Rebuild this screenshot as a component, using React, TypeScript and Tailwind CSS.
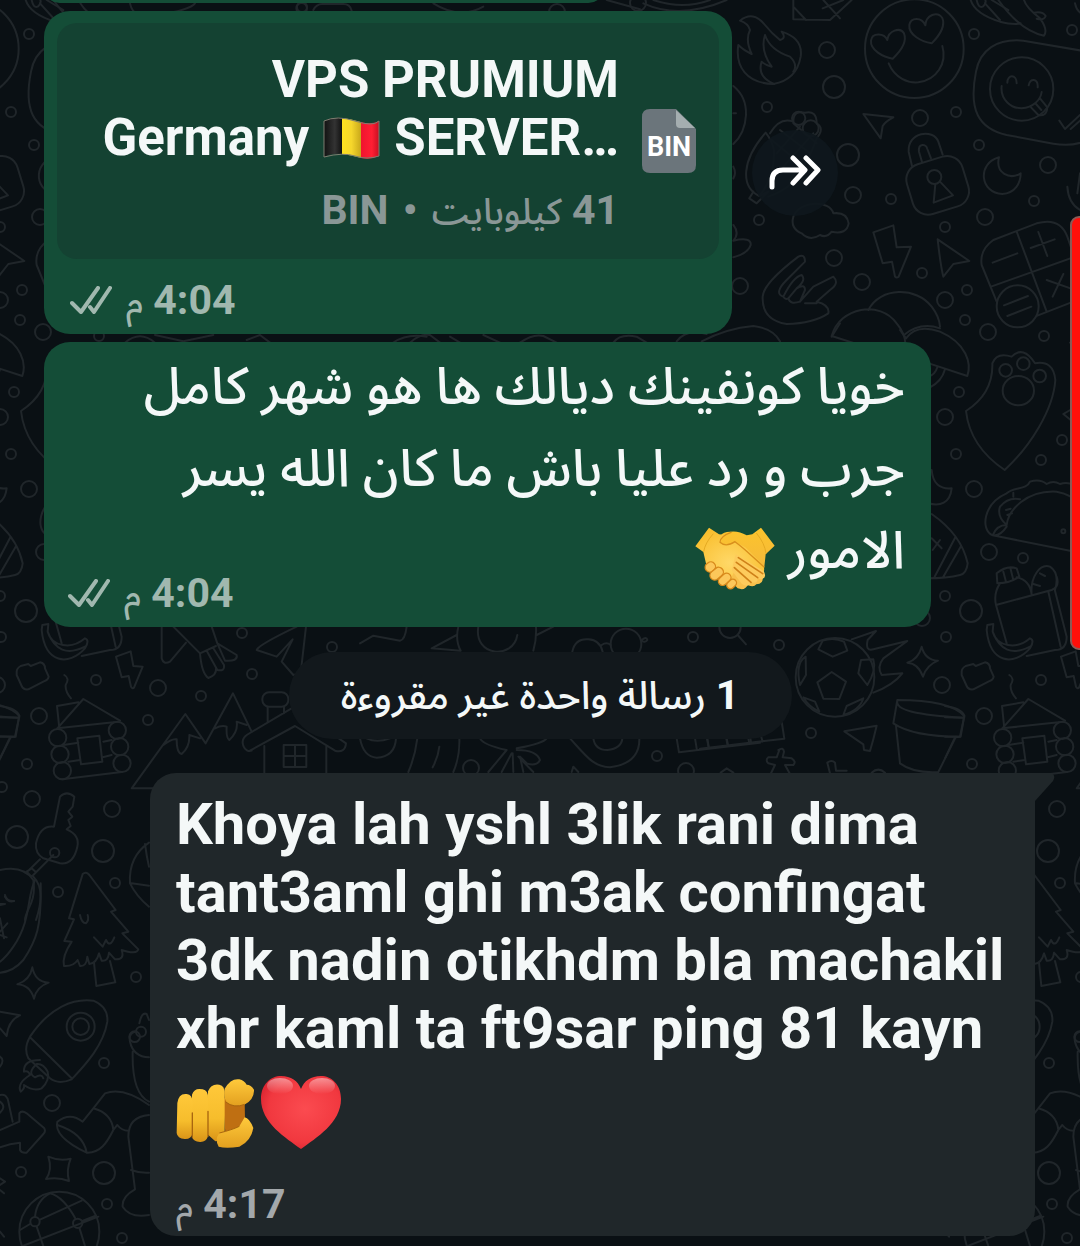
import React from "react";

const dots: [number, number, number][] = [
  [974, 34, 5], [1072, 30, 5], [827, 50, 8], [834, 87, 11], [920, 118, 8], [956, 112, 5],
  [848, 155, 11], [979, 145, 5], [1048, 165, 8], [853, 195, 8], [891, 199, 5], [1034, 201, 5],
  [985, 217, 8], [945, 227, 5], [834, 258, 8], [862, 282, 8], [922, 273, 5], [945, 300, 8],
  [967, 290, 5], [965, 320, 5], [988, 332, 8], [1044, 336, 5], [959, 392, 5], [945, 417, 8],
  [956, 454, 5], [1062, 440, 5], [1041, 460, 5], [974, 489, 8], [989, 552, 8], [1023, 558, 5],
  [945, 596, 5], [971, 611, 11], [946, 637, 5], [922, 618, 8], [767, 107, 5], [759, 220, 5],
  [740, 286, 8], [638, 3, 8], [557, 12, 8], [302, 7, 5], [779, 645, 5], [942, 685, 8],
  [811, 733, 5], [39, 716, 8], [27, 764, 5], [96, 680, 5], [158, 688, 8], [201, 696, 5],
  [252, 674, 5], [242, 633, 5], [332, 647, 5], [148, 720, 5], [32, 799, 8], [112, 809, 8],
  [17, 837, 11], [103, 851, 11], [115, 883, 5], [58, 892, 5], [2, 787, 5], [136, 977, 5],
  [104, 1063, 5], [52, 1103, 8], [21, 1172, 5], [104, 1173, 11], [107, 1204, 5], [122, 1238, 5],
  [693, 637, 5], [657, 756, 5], [686, 771, 8], [471, 768, 8],
];

function DoodleTile() {
  return (
    <g id="doodles">
      {dots.map(([x, y, r]) => (
        <circle key={`${x}-${y}`} cx={x} cy={y} r={r} />
      ))}

      {/* heart-eyed face, sticker note, lock, moon, calculator */}
      <g transform="translate(820 0) scale(0.33333)" strokeWidth="6">
        <circle cx="283" cy="146" r="148" />
        <path d="M218 176C190 172 150 150 153 122C156 98 192 98 202 120C205 92 240 80 252 100C262 125 240 155 218 176Z" />
        <path d="M335 130C305 125 265 105 268 75C272 52 305 50 316 76C318 45 352 32 367 54C378 82 355 110 335 130Z" />
        <path d="M206 190C225 235 265 250 295 247C350 240 382 190 367 138" />
        <path d="M890 170L610 122C530 115 480 150 468 215C445 330 475 385 560 405L700 431Q780 445 835 400" />
        <circle cx="605" cy="267" r="95" />
        <path d="M562 248C562 222 590 222 590 250M626 256C630 232 655 235 653 262M545 258C540 300 575 325 605 325C640 322 662 300 665 276M633 322L655 345Q680 350 682 322L660 295M648 312L664 330" />
        <path d="M718 362L735 387L780 345M752 387L780 362" />
        <path d="M452 0Q465 42 540 65Q580 75 602 70M470 0Q475 25 488 20Q500 10 496 0M535 0Q600 92 672 107Q685 90 660 55Q618 22 612 0M642 38Q668 33 677 48Q672 62 650 56" />
        <path d="M130 342L220 352Q195 365 188 378L182 415Q150 370 130 342Z" />
        <path d="M276 498L266 455C262 395 340 385 355 425L368 464M306 486L297 455C294 430 318 430 322 447L333 475" />
        <rect x="266" y="478" width="174" height="156" rx="48" transform="rotate(-17 353 556)" />
        <circle cx="343" cy="531" r="21" />
        <path d="M346 552L341 608L399 586L360 545" />
        <path d="M537 472C470 490 480 580 547 582C585 580 602 550 602 520C570 540 525 520 537 472Z" />
        <path d="M160 697L220 676L230 742L273 740L236 830Q230 835 225 830L216 785L188 790Z" />
        <path d="M353 718L448 783L400 792L370 830Q362 800 353 718Z" />
        <path d="M530 905L485 795Q478 750 520 720L650 670Q720 650 742 710L790 850Q795 880 760 905L652 947M590 695L680 935M513 860L780 765M518 788L592 760M632 744L704 718M655 696L682 768M680 840L760 868M730 822L698 890M552 916L624 888M562 948L634 920" />
        <circle cx="593" cy="919" r="63" />
        <path d="M145 930C180 860 290 860 335 920Q358 950 360 980M35 1008C60 920 180 900 230 970Q255 1000 256 1030M35 1008L256 1078M252 1005Q300 965 360 985" />
        <path d="M-80 650C-60 600 30 600 40 640Q80 635 86 670Q80 705 35 695Q20 715 0 705Q-30 725 -55 700Q-90 685 -80 650Z" />
        <path d="M742 560Q745 610 780 630M780 520L772 580" />
      </g>

      {/* flame, kite, corn, rock hand */}
      <g transform="translate(400 0) scale(0.33333)" strokeWidth="6">
        <path d="M1020 62Q1060 30 1095 75Q1115 100 1140 120Q1160 115 1145 95Q1210 115 1202 170Q1190 240 1120 252C1040 250 1005 200 1015 135Q1030 150 1055 162Q1035 120 1050 90Q1045 70 1020 62Z" />
        <path d="M1122 252Q1070 230 1085 185Q1095 195 1115 200Q1080 150 1095 105Q1110 150 1170 170Q1195 195 1180 215" />
        <path d="M1180 0V58L1290 60L1355 0M1180 20L1218 60M1270 0L1320 55M1268 25L1330 0" />
        <path d="M1000 258Q1040 290 1038 345Q1035 400 1000 432M1000 500Q1010 520 1000 535M1000 340H1008" />
        <path d="M1097 398C1025 480 1020 560 1078 588Q1125 530 1122 450Q1115 420 1097 398ZM1078 588L1105 575L1070 610L1048 595L1060 575" />
        <path d="M1110 400Q1140 350 1180 365Q1180 330 1215 338Q1250 330 1250 370Q1275 385 1250 415Q1230 470 1215 490Q1190 560 1105 590M1115 420L1200 490M1140 390L1230 460M1180 370L1250 430M1130 460L1200 380M1150 500L1240 400M1170 540L1210 480" />
        <circle cx="1196" cy="355" r="20" />
        <circle cx="1232" cy="385" r="24" />
        <path d="M1000 675Q1020 700 1000 722Q1055 710 1052 735Q1045 760 1000 772" />
        <path d="M1195 770Q1215 760 1215 785L1160 840Q1120 880 1150 890Q1155 900 1165 895Q1170 915 1200 905L1240 860L1300 830Q1320 850 1290 870L1250 905Q1290 915 1285 940Q1240 970 1160 972Q1085 960 1088 890Q1090 850 1195 770ZM1150 890Q1180 830 1205 825Q1220 840 1190 865L1165 895M1190 865Q1215 850 1215 870L1200 905M1215 910H1250" />
        <path d="M830 1024Q860 985 920 1002M905 1024Q980 985 1060 978Q1120 985 1140 1024M1295 1010L1320 970M30 1028Q60 1000 90 1005L120 1028M150 1010L180 1028M250 1005L300 1028M360 1028Q400 1000 430 1008L470 1028M640 1028Q660 1000 710 1010L740 1028" />
        <path d="M730 10Q840 60 980 0M760 0Q850 30 930 0M620 0L720 28" />
        <path d="M100 10Q180 60 250 20" />
      </g>

      {/* strip between the first bubbles */}
      <g transform="translate(40 0) scale(0.33333)" strokeWidth="6">
        <path d="M270 10Q280 60 350 45Q450 30 465 10M820 30Q830 10 850 12H910Q930 12 935 32M0 10L45 60M20 0L70 30" />
        <path d="M255 1028Q300 990 345 1028M345 1005L430 1024L520 1005M620 1020L660 1005L690 1028M1060 1028Q1100 1000 1160 1010" />
        <circle cx="785" cy="25" r="16" />
      </g>

      {/* mushroom, paw, taco, bottle, banana */}
      <g transform="translate(800 330) scale(0.33333)" strokeWidth="6">
        <path d="M300 0L318 25Q350 -20 420 5C500 40 515 100 502 138L380 98M435 118Q425 155 390 172M412 112Q405 135 385 140" />
        <path d="M498 243Q580 190 577 100Q590 65 635 80Q670 45 705 100Q760 90 766 150C760 240 690 350 614 420Q510 350 498 243Z" />
        <circle cx="617" cy="121" r="19" />
        <circle cx="670" cy="101" r="19" />
        <circle cx="719" cy="138" r="19" />
        <ellipse cx="655" cy="182" rx="47" ry="44" />
        <path d="M845 220L790 252L815 272M395 420Q400 480 455 475C450 520 420 530 385 520" />
        <path d="M578 616C540 600 550 520 620 490C640 470 680 480 690 455Q720 445 740 462Q760 450 780 462Q820 450 850 490C890 530 905 600 905 640Q890 680 840 668L578 616M578 616Q590 585 620 585C625 540 680 480 770 485C860 500 890 600 860 665M640 488V500M620 585Q590 560 600 530Q625 500 660 508M578 616Q600 620 620 590M618 540L632 536M622 555L636 550" />
        <circle cx="790" cy="604" r="6" />
        <path d="M395 552C450 590 490 640 503 700Q500 730 480 735Q430 748 340 744M404 740L466 622M430 740L482 650M395 625L425 655M420 630L398 660" />
        <path d="M592 760L590 730Q620 705 650 715L658 740Q630 760 592 760ZM610 725L618 755M632 718L640 750M600 760Q580 790 588 825L620 940M588 825L755 780Q780 770 770 740M650 742Q690 750 695 795M695 795C690 740 720 700 750 710Q780 730 765 780M720 730L735 738M700 762L720 768M745 785L782 950M765 782L800 920Q800 960 765 960L680 978" />
        <path d="M562 885L580 882L578 905C590 950 650 960 690 925Q705 930 690 955C640 1010 570 1000 560 900ZM578 905Q610 990 690 950" />
      </g>

      {/* cabin, mountains, house, key, rocket top */}
      <g transform="translate(0 620) scale(0.33333)" strokeWidth="6">
        <path d="M50 155Q50 145 62 138L85 132L92 138L120 127Q135 130 135 145L146 170Q145 180 130 185L85 208Q70 210 65 198L50 165Z" />
        <path d="M348 110L392 94L400 138L428 140L402 203Q398 208 393 200L386 168L365 172Z" />
        <path d="M193 165Q210 175 197 195Q195 215 213 235M172 325L250 237L360 302M178 325L171 258L235 247M172 325L355 305M190 375L235 368M310 365L335 360M205 425L240 420M308 412L335 405M187 478L365 456" />
        <path d="M232 355L298 347L307 425L243 433Z" />
        <circle cx="173" cy="353" r="26" />
        <circle cx="180" cy="403" r="26" />
        <circle cx="187" cy="452" r="26" />
        <circle cx="352" cy="331" r="26" />
        <circle cx="359" cy="380" r="26" />
        <circle cx="366" cy="430" r="26" />
        <path d="M490 505H395L556 282L617 370L699 220L755 335M490 375Q515 355 530 358Q530 400 545 402Q570 380 568 345L600 355M645 325Q665 315 680 320Q678 355 688 360Q715 335 710 305L740 315" />
        <path d="M803 305V260M852 280V260M740 345L900 250M750 392L885 318L1005 392Q1035 400 1038 370L980 330M740 345C715 365 735 400 755 392M793 460V378M979 460V378M851 375H919V441H851ZM885 375V441M851 408H919" />
        <rect x="787" y="217" width="78" height="43" rx="20" />
        <path d="M485 20V115Q490 135 510 125L558 68M520 20L600 100M635 20L652 70L710 105Q715 125 675 122L652 70M600 100Q605 160 625 174Q650 165 648 145M600 100L648 78M620 92L652 150Q675 155 672 135L640 85" />
        <path d="M918 20L902 160L880 165L845 125L878 58L830 110L770 90Q775 75 890 20" />
        <path d="M162 620L180 530Q200 510 223 530L218 560L205 575L217 590L205 600L212 618L200 628Q240 645 232 680Q220 735 180 730L130 715Q105 700 108 670Q120 615 162 620Z" />
        <circle cx="164" cy="698" r="14" />
        <path d="M120 718L85 752M160 705L100 765M80 755L95 745L108 757L95 770Z" />
        <path d="M0 750Q70 735 100 780C110 850 75 870 75 900M100 770C130 800 125 850 108 900M15 825Q20 845 42 843M0 855L15 852" />
        <path d="M447 668Q385 710 390 790Q410 830 447 860M435 672Q440 710 447 740M395 790L447 797" />
        <path d="M0 258Q50 265 58 287L47 350H0M47 350L30 352L0 415M0 292L58 293" />
      </g>

      {/* tree, star, rocket, boot, globe */}
      <g transform="translate(0 860) scale(0.33333)" strokeWidth="6">
        <path d="M248 42Q258 33 268 45L347 150L333 155L385 215L367 220L415 268Q410 285 365 270Q375 300 345 298L327 278Q325 305 305 302L297 280Q290 310 268 312L262 290Q260 320 240 318L233 300Q220 320 192 318Q185 290 215 245L193 243L222 178L207 175Z" />
        <path d="M240 165Q245 190 258 190Q268 180 263 165M282 232L308 260L318 240Q330 265 343 232M282 308L289 378L346 367L330 303" />
        <path d="M97 322Q105 365 146 368Q110 380 102 416Q90 375 52 373Q90 360 97 322Z" />
        <path d="M105 60C80 110 95 180 40 260Q20 290 0 305M122 70C125 200 110 240 70 300Q40 335 0 338M15 110Q25 128 42 123M0 132H10M0 175L12 235M22 190L0 215M20 232L0 225" />
        <path d="M90 530C150 440 220 415 280 422Q325 440 322 485C310 560 250 620 215 658Q175 675 150 655L85 595Q70 565 90 530ZM90 532L215 655" />
        <circle cx="242" cy="500" r="42" />
        <circle cx="242" cy="500" r="25" />
        <path d="M120 600Q70 600 72 635Q85 630 90 645Q50 670 62 695Q75 685 72 675Q100 695 125 685Q150 660 143 635Q130 610 110 612Q80 640 105 652Q125 640 130 655" />
        <path d="M0 455L60 466Q25 480 20 528L0 505M0 590Q15 600 0 620" />
        <path d="M0 705Q20 700 25 725L38 785M0 810L58 785V760Q65 750 80 760L133 805Q138 815 130 822L80 878Q65 880 60 870V848Q30 850 0 862M0 725Q20 740 0 758" />
        <path d="M280 745L315 700Q370 680 447 735M280 745L248 785Q210 755 172 785Q160 830 260 878C300 880 320 850 340 810L352 795Q365 812 385 812M280 745Q335 760 340 810M172 795Q250 820 260 878" />
        <path d="M447 765Q385 770 385 830L405 988Q365 1010 368 1040Q390 1075 447 1065M393 930Q420 940 447 938M398 575Q395 700 447 725M390 545Q400 590 447 592M418 490Q425 455 440 462L447 480M390 545Q385 520 405 515" />
        <circle cx="404" cy="530" r="16" />
        <circle cx="423" cy="515" r="15" />
        <path d="M145 890Q180 905 212 896Q198 930 207 963Q175 950 138 957Q158 930 145 890Z" />
        <circle cx="178" cy="1115" r="120" />
        <circle cx="105" cy="1085" r="14" />
        <circle cx="233" cy="1090" r="14" />
        <path d="M120 1079L245 1022M247 1083L285 1068M90 1092L60 1110M68 1158L295 1070M105 1070Q110 1020 150 1000M110 1100L130 1158M150 1000Q190 1010 227 1077M238 1103L255 1158M0 955L15 965L0 975M0 990L12 1000M0 1115L12 1130" />
      </g>

      {/* football, flower pot, star */}
      <g transform="translate(700 620) scale(0.33333)" strokeWidth="6">
        <circle cx="405" cy="172" r="118" />
        <path d="M395 156L438 185L418 237L370 236L352 187ZM355 88L368 62Q400 50 432 65L442 92L398 110ZM317 110Q285 130 300 195L318 165ZM483 120L520 118Q530 150 502 195L475 160ZM310 232L345 245L358 275Q325 260 310 232ZM490 235L440 258L430 285Q480 270 490 235Z" />
        <path d="M455 58L528 33L503 60Q495 95 520 88L622 63L550 115Q530 140 545 165L607 160Q580 195 520 218" />
        <path d="M665 80Q675 120 714 122Q680 135 669 170Q655 130 622 128Q655 118 665 80Z" />
        <path d="M592 240Q750 240 793 288L780 350Q640 350 580 310ZM592 243C585 270 650 285 790 293M588 318L600 430Q640 460 715 456L768 350" />
        <path d="M433 334L530 317Q520 360 510 393L492 390L490 373Z" />
        <path d="M235 390Q250 380 252 395L248 412L275 415Q290 425 280 435L255 435L270 462M238 390L230 412L205 412Q195 420 205 430L225 435L212 462M382 428Q395 418 405 428L408 452H440M382 428L390 460M62 458L80 445L100 458M515 458Q535 440 555 458" />
        <circle cx="90" cy="22" r="32" />
        <path d="M113 45L138 73M0 386L253 356L245 305M20 350L26 384M78 350L83 378M150 350L154 370M183 348L188 365" />
      </g>

      {/* strips above and below the unread divider */}
      <g transform="translate(360 600) scale(0.33333)" strokeWidth="6">
        <path d="M140 80Q135 120 120 122L40 107L0 130M295 80Q285 120 302 152L215 145L290 105M355 80C340 170 460 180 472 105M528 80Q530 120 520 152M530 105L580 80M637 155Q645 115 685 118Q720 120 728 155M725 135Q740 125 752 135M845 120Q860 108 862 120Q855 130 845 122" />
        <circle cx="798" cy="132" r="46" />
        <path d="M0 415Q10 470 50 473Q105 470 108 415M20 415Q50 430 90 415M172 415Q165 470 145 516M298 415Q300 470 280 516M238 440Q235 470 218 502M360 415Q370 435 440 450L385 516M470 445Q550 430 560 415M470 450Q530 450 540 480Q530 500 500 490L480 470L490 516M455 460L425 516M475 470L520 516M458 460L460 516M630 415C680 470 700 500 750 502Q840 490 838 415M700 415Q705 450 742 450Q785 445 787 415M950 415L957 457L1200 428M1005 415L1010 445M1042 415L1046 440M1100 415L1104 435M1165 415L1168 430M635 516L640 500L655 516" />
      </g>
    </g>
  );
}

function Wallpaper() {
  return (
    <svg
      aria-hidden="true"
      className="pointer-events-none absolute left-0 top-0"
      width="1080"
      height="1246"
      viewBox="0 0 1080 1246"
      fill="none"
      stroke="#20262a"
      strokeWidth="2"
      strokeLinecap="round"
      strokeLinejoin="round"
    >
      <DoodleTile />
      <use href="#doodles" x="945" />
      <use href="#doodles" x="-945" />
    </svg>
  );
}

function Ticks() {
  return (
    <svg role="img" aria-label="Delivered" width="42" height="28" viewBox="0 0 42 28" fill="none" stroke="currentColor" strokeWidth="4" strokeLinecap="round" strokeLinejoin="round">
      <path d="M2 17L11 26L28 2M20 21L24 26L40 2" />
    </svg>
  );
}

function Time({ value, ticks }: { value: string; ticks?: boolean }) {
  return (
    <div className="flex items-center justify-end gap-[14px] text-[41px] leading-[50px] font-bold">
      <time>
        {value} <span className="text-[34px] leading-none font-medium">م</span>
      </time>
      {ticks && <Ticks />}
    </div>
  );
}

function BelgianFlag() {
  return (
    <svg role="img" aria-label="Belgian flag" className="mx-[14px] inline-block align-[-4px]" width="57" height="42" viewBox="0 0 57 42">
      <defs>
        <linearGradient id="fk" x1="0" x2="1"><stop offset="0" stopColor="#111" /><stop offset=".6" stopColor="#333" /><stop offset="1" stopColor="#111" /></linearGradient>
        <linearGradient id="fy" x1="0" x2="1"><stop offset="0" stopColor="#ffe21f" /><stop offset=".5" stopColor="#f5d62c" /><stop offset="1" stopColor="#c9a81a" /></linearGradient>
        <linearGradient id="fr" x1="0" x2="1"><stop offset="0" stopColor="#f0142f" /><stop offset=".6" stopColor="#ff1f33" /><stop offset="1" stopColor="#c80f22" /></linearGradient>
      </defs>
      <path d="M1 4Q9 0 19 1V37Q9 36 1 40Z" fill="url(#fk)" />
      <path d="M19 1Q28 2 38 5V41Q28 38 19 37Z" fill="url(#fy)" />
      <path d="M38 5Q48 8 56 4V39Q48 43 38 41Z" fill="url(#fr)" />
      <path d="M1 4Q14-2 32 4T56 4V39Q44 43 32 39T1 40Z" fill="none" stroke="#7d7d70" strokeWidth="1" />
    </svg>
  );
}

function Handshake() {
  return (
    <svg role="img" aria-label="Handshake" className="inline-block align-[-23px]" width="80" height="64" viewBox="0 0 240 192">
      <defs>
        <linearGradient id="hs" x1="0" y1="0" x2="0" y2="1"><stop offset="0" stopColor="#fcc42c" /><stop offset="1" stopColor="#f4b83c" /></linearGradient>
        <radialGradient id="hp" cx=".5" cy=".6" r=".6"><stop offset="0" stopColor="#ffd868" /><stop offset="1" stopColor="#f9bf2f" /></radialGradient>
      </defs>
      <path d="M198 2L239 56L212 82L208 120L130 130L70 60L76 26Q85 14 105 14Q130 10 155 25L172 22Z" fill="url(#hs)" />
      <path d="M42 2L1 58L25 75L36 122L110 175L150 178L200 150Q212 130 205 115L150 60L118 44Q90 60 76 48Q75 35 92 24L72 22Z" fill="url(#hp)" />
      <path d="M130 110L203 150Q206 172 184 172Q176 182 158 174Q150 192 128 184L105 160Z" fill="#f8c04c" />
      <path d="M122 82L206 132Q216 150 203 155Q196 160 188 152Q190 172 168 166Q160 184 140 170L110 130Z" fill="#fdcb5c" />
      <g fill="#fcc75a" stroke="#d98a1c" strokeWidth="4">
        <rect x="30" y="106" width="32" height="28" rx="14" transform="rotate(-40 46 120)" />
        <rect x="43" y="126" width="44" height="28" rx="14" transform="rotate(-40 65 140)" />
        <rect x="68" y="144" width="42" height="26" rx="13" transform="rotate(-42 89 157)" />
        <rect x="94" y="160" width="32" height="22" rx="11" transform="rotate(-45 110 171)" />
      </g>
      <path d="M130 92L203 140M124 106L188 152M118 122L168 166" stroke="#cf8118" strokeWidth="5" strokeLinecap="round" fill="none" />
      <path d="M108 16Q75 28 75 46Q92 62 120 44Q135 55 150 68L207 120" stroke="#d9901c" strokeWidth="4" strokeLinecap="round" fill="none" />
      <path d="M26 74Q30 48 55 20M213 80Q210 50 184 18" stroke="#e5aa22" strokeWidth="3" fill="none" />
    </svg>
  );
}

function PointingHand() {
  return (
    <svg role="img" aria-label="Pointing at you" width="78" height="70" viewBox="0 0 234 210">
      <defs>
        <linearGradient id="pf" x1="0" y1="0" x2="0" y2="1"><stop offset="0" stopColor="#ffc83a" /><stop offset=".6" stopColor="#f6bd2c" /><stop offset="1" stopColor="#d99418" /></linearGradient>
        <linearGradient id="pt" x1="0" y1="0" x2="0" y2="1"><stop offset="0" stopColor="#ffca3c" /><stop offset="1" stopColor="#e3a01f" /></linearGradient>
      </defs>
      <path d="M140 60L206 70L207 125L230 160L150 190Z" fill="#bf6f12" />
      <path d="M96 40Q105 16 130 20Q147 22 146 50V160Q140 190 118 190L96 170Z" fill="url(#pf)" />
      <path d="M48 50Q55 28 80 34Q97 38 96 60V175Q90 193 72 192Q52 190 48 178Z" fill="url(#pf)" />
      <path d="M4 75Q8 45 32 48Q50 50 50 75V165Q46 184 26 183Q4 182 2 165Z" fill="url(#pf)" />
      <path d="M49 105V178M96 100V175" stroke="#a8660f" strokeWidth="4" strokeLinecap="round" />
      <path d="M146 32Q165 0 190 4Q205 8 212 20Q225 20 234 35Q235 65 205 80Q165 90 150 70Q142 55 146 32Z" fill="url(#pt)" />
      <path d="M149 72Q175 92 206 79" stroke="#a8660f" strokeWidth="3" fill="none" />
      <path d="M206 118Q220 120 232 150Q225 190 190 206Q150 212 128 206Q115 185 130 165Q170 155 190 145Z" fill="url(#pt)" />
      <path d="M130 165Q170 155 190 145" stroke="#a8660f" strokeWidth="3" fill="none" />
    </svg>
  );
}

function Heart() {
  return (
    <svg role="img" aria-label="Red heart" width="82" height="73" viewBox="0 0 82 73">
      <defs>
        <radialGradient id="ht" cx=".55" cy=".45" r=".65"><stop offset="0" stopColor="#fb4b50" /><stop offset=".7" stopColor="#f1383f" /><stop offset="1" stopColor="#d41f2d" /></radialGradient>
        <linearGradient id="hl" x1="0" y1="0" x2="0" y2="1"><stop offset="0" stopColor="#fff" stopOpacity=".45" /><stop offset="1" stopColor="#fff" stopOpacity="0" /></linearGradient>
      </defs>
      <path d="M41 73C26 62 1 47 1 23C1 8 11 0 21 0C31 0 38 5 41 13C44 5 51 0 61 0C71 0 81 8 81 23C81 47 56 62 41 73Z" fill="url(#ht)" />
      <ellipse cx="20" cy="10" rx="13" ry="8" fill="url(#hl)" />
      <ellipse cx="62" cy="10" rx="13" ry="8" fill="url(#hl)" />
    </svg>
  );
}

function FileIcon() {
  return (
    <div className="relative flex h-16 w-[54px] shrink-0 items-end justify-center">
      <svg aria-hidden="true" className="absolute inset-0" width="54" height="64" viewBox="0 0 54 64">
        <path d="M8 0H34L54 20V56Q54 64 46 64H8Q0 64 0 56V8Q0 0 8 0Z" fill="#6b757b" />
        <path d="M34 1L53 19H38Q34 19 34 15Z" fill="#a5aeb0" />
      </svg>
      <span className="relative pb-[10px] text-[27px] leading-8 font-bold text-white">BIN</span>
    </div>
  );
}

function ForwardButton() {
  return (
    <button type="button" aria-label="Forward" className="flex size-[86px] items-center justify-center rounded-full bg-[#0e171d]/90">
      <svg width="52" height="37" viewBox="0 0 52 37" fill="none" stroke="#fff" strokeWidth="5" strokeLinecap="round" strokeLinejoin="round">
        <path d="M3 33V27Q3 16 14 16H35M24 4L36 16L24 29M37 4L49 16L37 29" />
      </svg>
    </button>
  );
}

export default function App() {
  return (
    <main
      dir="rtl"
      className="relative flex min-h-screen flex-col overflow-hidden bg-[#0a1014] font-['Roboto','Noto_Sans_Arabic','Noto_Naskh_Arabic','DejaVu_Sans',sans-serif] text-[#f4f8f8]"
    >
      <Wallpaper />

      <div className="relative -mt-7 ml-11 h-[31px] w-[560px] shrink-0 self-end rounded-[26px] bg-[#144d37]" />

      <div className="relative mt-2 ml-11 flex flex-row-reverse items-center gap-5 self-end">
        <article dir="rtl" className="w-[688px] rounded-[26px] bg-[#144d37] px-[13px] pt-3 pb-[9px]">
          <div className="flex h-[236px] items-center gap-[23px] rounded-[20px] bg-[#144232] px-[23px]">
            <FileIcon />
            <div className="grow pt-1 text-right">
              <h2 dir="ltr" className="text-[51px] leading-[58px] font-bold whitespace-nowrap">
                VPS PRUMIUM
                <br />
                Germany<BelgianFlag />SERVER…
              </h2>
              <p className="mt-[18px] text-[41px] leading-[50px] font-bold text-[#8a9796]">
                41 <span className="text-[36px] leading-none font-medium">كيلوبايت</span>
                <span className="mx-1"> • </span>BIN
              </p>
            </div>
          </div>
          <div className="mt-4 pl-[13px] text-[#a1b8af]">
            <Time value="4:04" ticks />
          </div>
        </article>
        <ForwardButton />
      </div>

      <article className="relative mt-2 mr-[149px] ml-11 rounded-[26px] bg-[#144d37] pt-1 pr-[26px] pb-[9px] pl-6">
        <p className="text-[52px] leading-[82px] font-medium">
          <span className="block h-[82px] whitespace-nowrap">خويا كونفينك ديالك ها هو شهر كامل</span>
          <span className="block h-[82px] whitespace-nowrap">جرب و رد عليا باش ما كان الله يسر</span>
          <span className="block h-[82px] whitespace-nowrap">الامور <Handshake /></span>
        </p>
        <div className="-mt-6 text-[#a1b8af]">
          <Time value="4:04" ticks />
        </div>
      </article>

      <div className="relative mt-[25px] flex h-[87px] w-[503px] shrink-0 items-center justify-center self-center rounded-full bg-[#12181c] text-[39px] leading-[50px] font-medium">
        <span><b className="text-[41px] leading-none">1</b> رسالة واحدة غير مقروءة</span>
      </div>

      <article className="relative mt-[34px] mr-[45px] ml-[150px] rounded-[26px] rounded-tr-none bg-[#20272a] px-[26px] pt-[17px] pb-[7px]">
        <svg aria-hidden="true" className="absolute -right-5 top-0" width="21" height="28" viewBox="0 0 21 28">
          <path d="M0 0H18Q22 3 19 8L1 28H0Z" fill="#20272a" />
        </svg>
        <p dir="ltr" className="text-left text-[58px] leading-[68px] font-bold whitespace-nowrap">
          Khoya lah yshl 3lik rani dima
          <br />
          tant3aml ghi m3ak confingat
          <br />
          3dk nadin otikhdm bla machakil
          <br />
          xhr kaml ta ft9sar ping 81 kayn
        </p>
        <div dir="ltr" className="mt-[14px] flex items-center gap-[6px]">
          <PointingHand />
          <Heart />
        </div>
        <div className="mt-[30px] text-[#a3a8ab]">
          <Time value="4:17" />
        </div>
      </article>

      <div aria-hidden="true" className="absolute -right-2 top-[216px] h-[434px] w-[18px] rounded-[10px] border-2 border-[#8a5a56] bg-[#ff0f0a]" />
    </main>
  );
}
